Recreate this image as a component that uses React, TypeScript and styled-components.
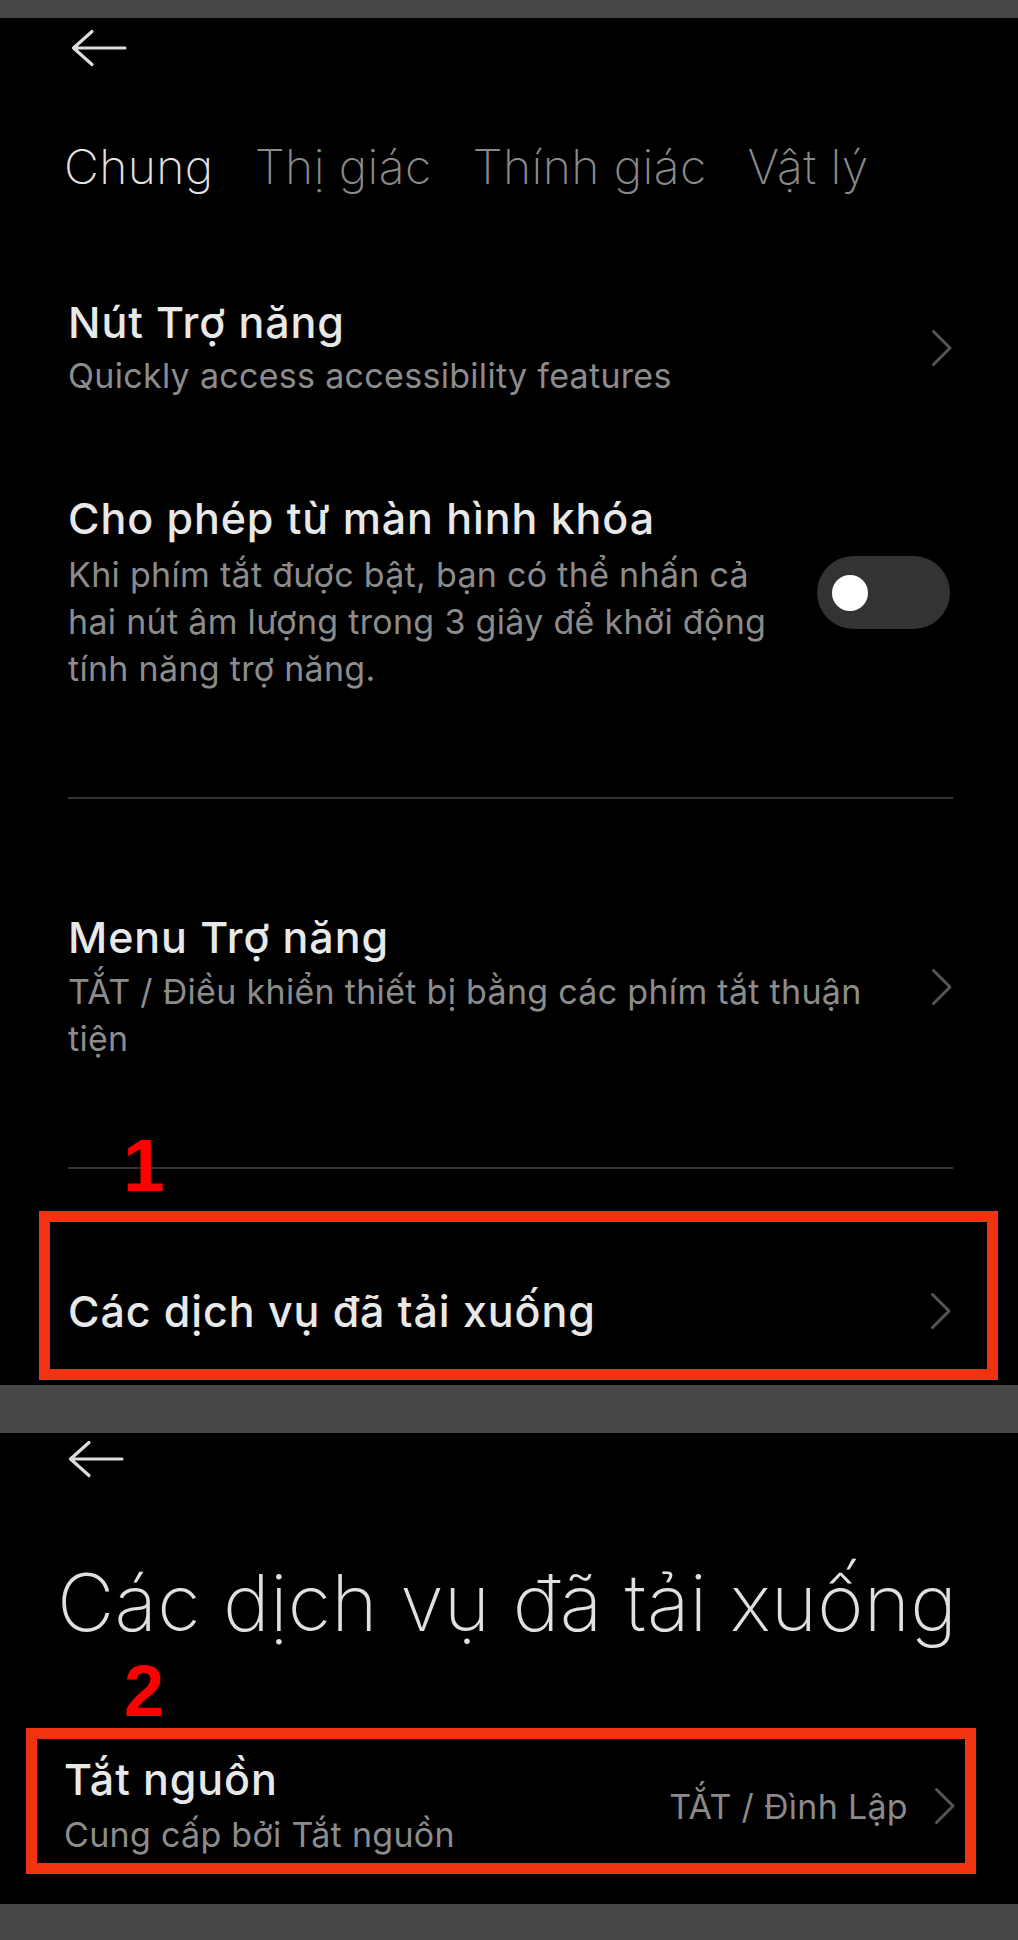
import React from "react";
import styled, { createGlobalStyle } from "styled-components";

const GlobalStyle = createGlobalStyle`
  html, body { margin: 0; padding: 0; background: #474747; }
  body { font-family: Inter, "Noto Sans", sans-serif; -webkit-font-smoothing: antialiased; }
  * { box-sizing: border-box; }
`;

const Page = styled.div`
  width: 1018px;
  padding: 18px 0 35px;
  display: flex;
  flex-direction: column;
  gap: 48px;
  background: #474747;
`;

const Screen = styled.section<{ $pb: number }>`
  background: #000;
  padding: 0 65px ${(p) => p.$pb}px 68px;
  display: flex;
  flex-direction: column;
`;

const TopBar = styled.div<{ $h: number; $offset: number }>`
  height: ${(p) => p.$h}px;
  display: flex;
  align-items: center;
  padding-left: ${(p) => p.$offset}px;
`;

const Tabs = styled.nav`
  margin-top: 60px;
  display: flex;
  gap: 41px;
  margin-left: -4px;
`;

const Tab = styled.span<{ $active?: boolean }>`
  font-size: 48px;
  font-weight: 200;
  letter-spacing: 0.4px;
  line-height: 60px;
  color: ${(p) => (p.$active ? "#e2e2e2" : "#8a8a8a")};
  white-space: nowrap;
`;

const Row = styled.div<{ $mt: number }>`
  margin-top: ${(p) => p.$mt}px;
  display: flex;
  align-items: center;
  gap: 48px;
`;

const TextCol = styled.div`
  flex: 1;
  min-width: 0;
  display: flex;
  flex-direction: column;
`;

const Title = styled.div`
  font-size: 43px;
  font-weight: 500;
  letter-spacing: 0.9px;
  line-height: 50px;
  color: #e8e8e8;
`;

const Sub = styled.div<{ $mt: number }>`
  margin-top: ${(p) => p.$mt}px;
  font-size: 34px;
  font-weight: 400;
  letter-spacing: 0.3px;
  line-height: 47px;
  color: #8c8c8c;
`;

const Divider = styled.hr<{ $mt: number }>`
  margin: ${(p) => p.$mt}px 0 0;
  border: none;
  height: 2px;
  background: #333;
`;

const Toggle = styled.div`
  width: 133px;
  height: 73px;
  margin-right: 3px;
  border-radius: 37px;
  background: #333333;
  display: flex;
  align-items: center;
  padding-left: 15px;
  flex-shrink: 0;
`;

const Knob = styled.div`
  width: 36px;
  height: 36px;
  border-radius: 50%;
  background: #fff;
`;

const Highlight = styled.div<{
  $mt: number;
  $ml: number;
  $mr: number;
  $pt: number;
  $pb: number;
  $pl: number;
  $pr: number;
}>`
  position: relative;
  margin: ${(p) => p.$mt}px ${(p) => p.$mr}px 0 ${(p) => p.$ml}px;
  border: 11px solid #f23312;
  padding: ${(p) => p.$pt}px ${(p) => p.$pr}px ${(p) => p.$pb}px ${(p) => p.$pl}px;
  display: flex;
  align-items: center;
  gap: 24px;
`;

const StepNumber = styled.span<{ $left: number; $top: number; $size: number }>`
  position: absolute;
  left: ${(p) => p.$left}px;
  top: ${(p) => p.$top}px;
  font-family: "Liberation Sans", Arial, sans-serif;
  font-weight: 700;
  font-size: ${(p) => p.$size}px;
  line-height: ${(p) => p.$size}px;
  color: #ff0000;
`;

const BigTitle = styled.h1`
  margin: 67px 0 0 -11px;
  font-size: 79px;
  font-weight: 200;
  letter-spacing: 0.2px;
  line-height: 100px;
  color: #e0e0e0;
  white-space: nowrap;
`;

const Value = styled.span`
  font-size: 34px;
  letter-spacing: 0.3px;
  line-height: 47px;
  color: #8a8a8a;
  white-space: nowrap;
`;

const RightGroup = styled.div`
  display: flex;
  align-items: center;
  gap: 26px;
  flex-shrink: 0;
`;

const BackArrow = () => (
  <svg width="56" height="38" viewBox="0 0 56 38" fill="none">
    <path
      d="M21 2.5 L2.5 19 L21 35.5 M2.5 19 H54"
      stroke="#dcdcdc"
      strokeWidth="3.2"
      strokeLinecap="round"
      strokeLinejoin="round"
    />
  </svg>
);

const Chevron = () => (
  <svg width="22" height="38" viewBox="0 0 22 38" fill="none" style={{ flexShrink: 0 }}>
    <path
      d="M2.5 2.5 L19 19 L2.5 35.5"
      stroke="#555"
      strokeWidth="3"
      strokeLinecap="round"
      strokeLinejoin="round"
    />
  </svg>
);

export default function App() {
  return (
    <>
      <GlobalStyle />
      <Page>
        <Screen $pb={5}>
          <TopBar $h={59} $offset={3}>
            <BackArrow />
          </TopBar>
          <Tabs>
            <Tab $active>Chung</Tab>
            <Tab>Thị giác</Tab>
            <Tab>Thính giác</Tab>
            <Tab>Vật lý</Tab>
          </Tabs>

          <Row $mt={100}>
            <TextCol>
              <Title>Nút Trợ năng</Title>
              <Sub $mt={5}>Quickly access accessibility features</Sub>
            </TextCol>
            <Chevron />
          </Row>

          <Row $mt={94}>
            <TextCol>
              <Title>Cho phép từ màn hình khóa</Title>
              <Sub $mt={8}>
                Khi phím tắt được bật, bạn có thể nhấn cả hai nút âm lượng trong 3 giây để khởi động tính
                năng trợ năng.
              </Sub>
            </TextCol>
            <Toggle>
              <Knob />
            </Toggle>
          </Row>

          <Divider $mt={105} />

          <Row $mt={113}>
            <TextCol>
              <Title>Menu Trợ năng</Title>
              <Sub $mt={6}>TẮT / Điều khiển thiết bị bằng các phím tắt thuận tiện</Sub>
            </TextCol>
            <Chevron />
          </Row>

          <Divider $mt={105} />

          <Highlight $mt={42} $ml={-29} $mr={-45} $pt={64} $pb={33} $pl={18} $pr={35}>
            <StepNumber $left={73} $top={-94} $size={75}>
              1
            </StepNumber>
            <TextCol>
              <Title>Các dịch vụ đã tải xuống</Title>
            </TextCol>
            <Chevron />
          </Highlight>
        </Screen>

        <Screen $pb={30}>
          <TopBar $h={52} $offset={-1}>
            <BackArrow />
          </TopBar>
          <BigTitle>Các dịch vụ đã tải xuống</BigTitle>
          <Highlight $mt={76} $ml={-42} $mr={-23} $pt={15} $pb={5} $pl={27} $pr={9}>
            <StepNumber $left={87} $top={-84} $size={72}>
              2
            </StepNumber>
            <TextCol>
              <Title>Tắt nguồn</Title>
              <Sub $mt={7}>Cung cấp bởi Tắt nguồn</Sub>
            </TextCol>
            <RightGroup>
              <Value>TẮT / Đình Lập</Value>
              <Chevron />
            </RightGroup>
          </Highlight>
        </Screen>
      </Page>
    </>
  );
}
